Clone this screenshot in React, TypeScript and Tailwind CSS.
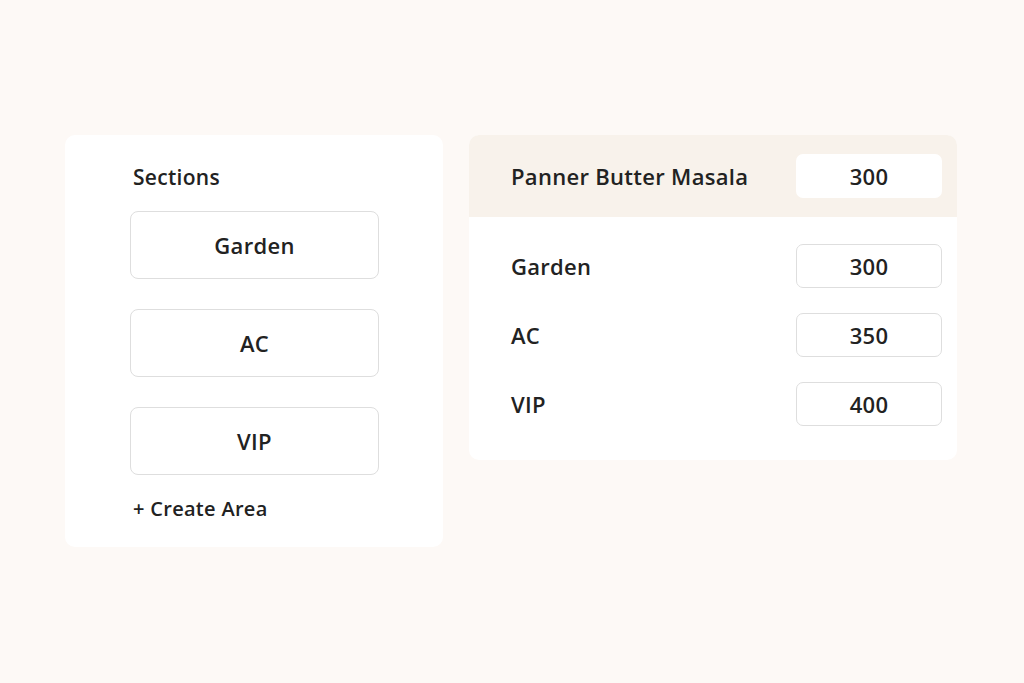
import React from 'react';

const sections = ['Garden', 'AC', 'VIP'];
const prices = [
  { name: 'Garden', price: '300' },
  { name: 'AC', price: '350' },
  { name: 'VIP', price: '400' },
];

const App: React.FC = () => {
  return (
    <div
      className="w-full h-[683px] bg-[#fdf9f6] text-[#222222] flex items-start gap-[26px] pl-[65px] pt-[135px]"
      style={{ fontFamily: '"Open Sans", "Noto Sans", sans-serif' }}
    >
      <div className="w-[378px] bg-white rounded-[10px] pl-[65px] pr-[65px] pt-[28px] pb-[24px]">
        <h2 className="text-[21px] leading-[28px] font-semibold tracking-[0.3px] pl-[3px] mb-[20px]">Sections</h2>
        <div className="flex flex-col gap-[30px]">
          {sections.map((s) => (
            <button
              key={s}
              className="h-[68px] w-[249px] border border-[#dedede] rounded-[8px] flex items-center justify-center text-[22px] font-semibold tracking-[0.3px]"
            >
              {s}
            </button>
          ))}
        </div>
        <div className="mt-[20px] pl-[3px] text-[20px] leading-[28px] font-semibold tracking-[0.3px]">+ Create Area</div>
      </div>

      <div className="w-[488px] bg-white rounded-[10px] overflow-hidden">
        <div className="h-[82px] bg-[#f8f2eb] flex items-center justify-between pl-[42px] pr-[15px]">
          <span className="text-[22px] font-semibold tracking-[0.3px]">Panner Butter Masala</span>
          <div className="w-[146px] h-[44px] bg-white rounded-[7px] flex items-center justify-center text-[22px] font-semibold tracking-[0.3px]">
            300
          </div>
        </div>
        <div className="flex flex-col gap-[25px] pt-[27px] pb-[34px] pl-[42px] pr-[15px]">
          {prices.map((p) => (
            <div key={p.name} className="flex items-center justify-between">
              <span className="text-[22px] font-semibold tracking-[0.3px]">{p.name}</span>
              <div className="w-[146px] h-[44px] border border-[#dedede] rounded-[7px] flex items-center justify-center text-[22px] font-semibold tracking-[0.3px]">
                {p.price}
              </div>
            </div>
          ))}
        </div>
      </div>
    </div>
  );
};

export default App;
